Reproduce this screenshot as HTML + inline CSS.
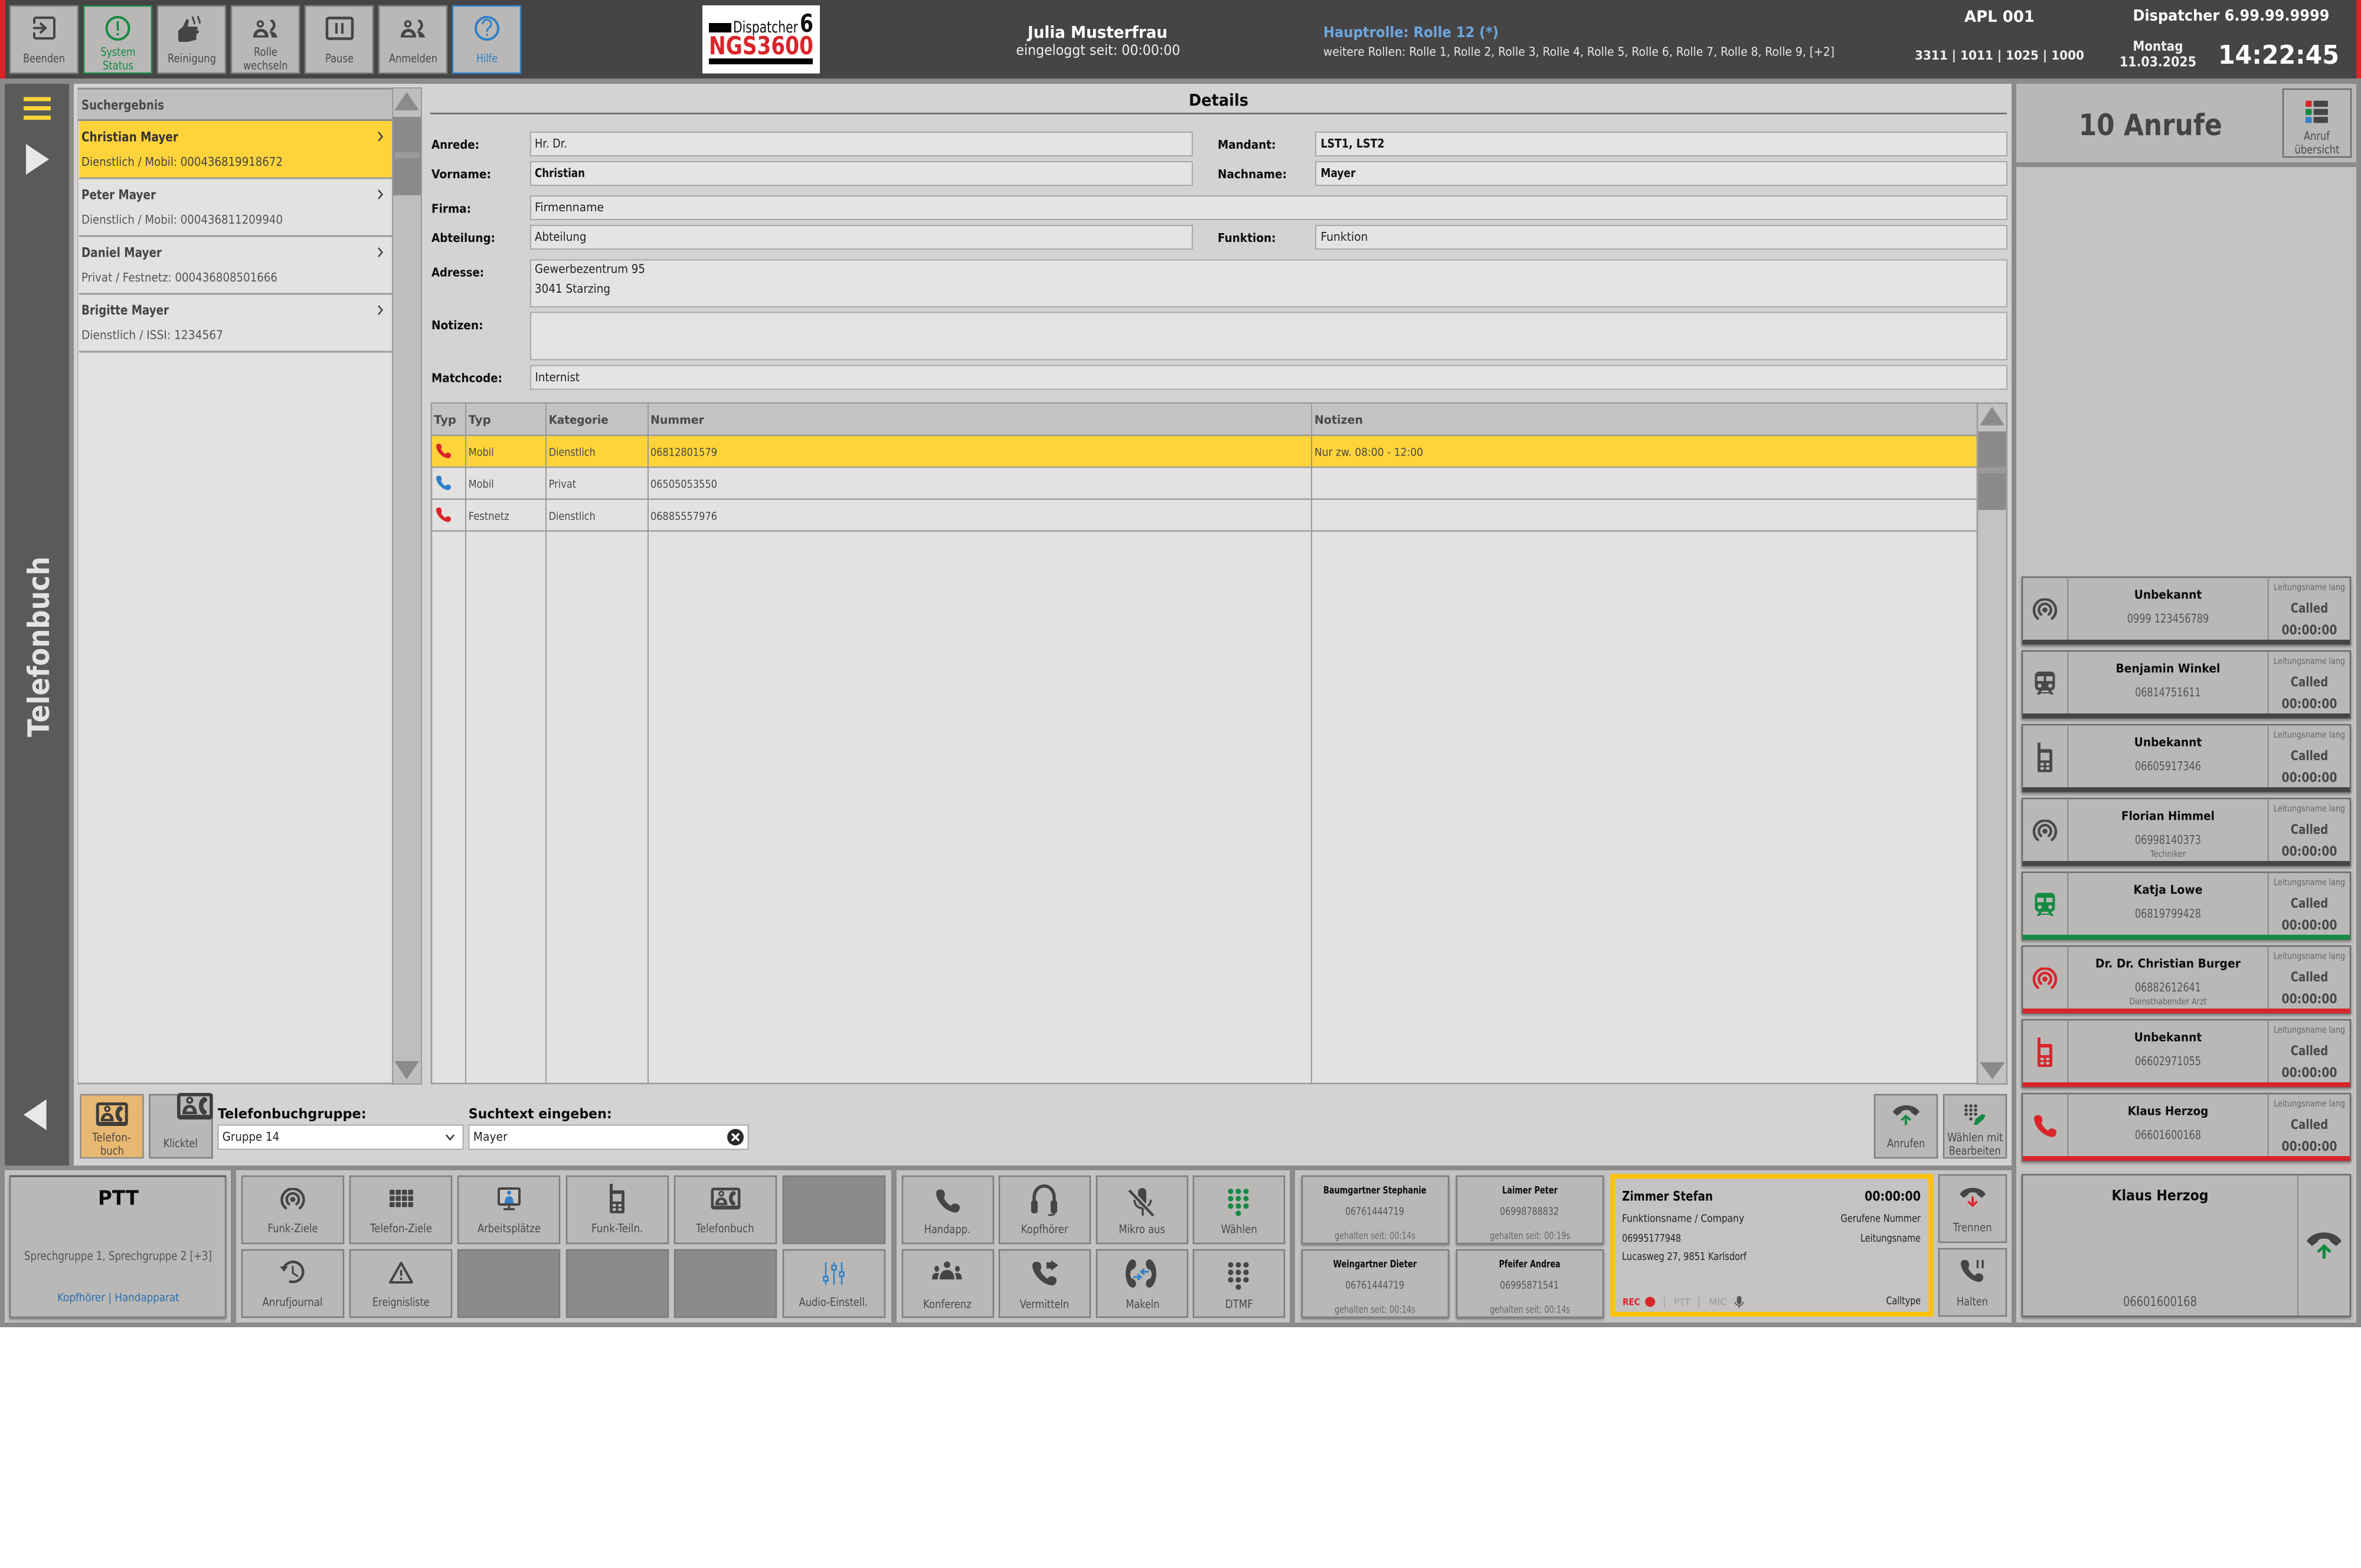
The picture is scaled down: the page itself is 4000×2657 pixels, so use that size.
<!DOCTYPE html>
<html lang="de"><head><meta charset="utf-8"><title>Dispatcher NGS3600 – Telefonbuch</title>
<style>
html,body{margin:0;padding:0;background:#fff}
svg{display:block}
text{font-family:"DejaVu Sans","Liberation Sans",sans-serif;fill:#4a4948}
.b{font-weight:700}
.w{fill:#fff}
.k{fill:#0c0c0c}
.btn{fill:#b9b8b6;stroke:#7e7d7b;stroke-width:2.5}
.emp{fill:#8c8b89;stroke:#7b7a78;stroke-width:2.5}
.fld{fill:#e5e4e2;stroke:#a8a8ab;stroke-width:2}
.sh{filter:drop-shadow(0 3px 2px rgba(0,0,0,.35))}
.card{fill:#b9b8b6;stroke:#6b6a68;stroke-width:2.5}
.sep{stroke:#8a8987;stroke-width:2}
.s18{font-size:19.5px}.s20{font-size:20.8px}.s21{font-size:22px}
</style></head>
<body>
<svg xmlns="http://www.w3.org/2000/svg" width="4000" height="2657" viewBox="0 0 4000 2657">
<defs>
<symbol id="radio" viewBox="0 0 44 40"><circle cx="22" cy="20" r="4.5" stroke="none"/><path d="M15.3 28A10.5 10.5 0 1 1 28.7 28M9.8 35A19 19 0 1 1 34.2 35" fill="none" stroke-width="4.5" stroke-linecap="round"/></symbol>
<symbol id="train" viewBox="0 0 34 39"><path fill-rule="evenodd" d="M7 0H27A7 7 0 0 1 34 7V25A7 7 0 0 1 27 32H7A7 7 0 0 1 0 25V7A7 7 0 0 1 7 0ZM4 8V16H15V8ZM19 8V16H30V8ZM4.6 24a3.4 3.4 0 1 0 6.8 0a3.4 3.4 0 1 0-6.8 0ZM22.6 24a3.4 3.4 0 1 0 6.8 0a3.4 3.4 0 1 0-6.8 0Z"/><path d="M7 32h5l-2 3h14l-2-3h5l5 7h-5l-2-2H10l-2 2H3z"/></symbol>
<symbol id="mobile" viewBox="0 0 25 50"><path fill-rule="evenodd" d="M0 1.5A1.5 1.5 0 0 1 3 0H5V11H22A3 3 0 0 1 25 14V47A3 3 0 0 1 22 50H3A3 3 0 0 1 0 47ZM5 17V30H20V17ZM4.500 36.500a3.300 2.500 0 1 0 6.600 0a3.300 2.500 0 1 0-6.600 0ZM13.900 36.500a3.300 2.500 0 1 0 6.600 0a3.300 2.500 0 1 0-6.600 0ZM4.500 43.500a3.300 2.500 0 1 0 6.600 0a3.300 2.500 0 1 0-6.600 0ZM13.900 43.500a3.300 2.500 0 1 0 6.600 0a3.300 2.500 0 1 0-6.600 0Z"/></symbol>
<symbol id="phone" viewBox="0 0 40 40"><path d="M7 0C2 0 0 3 0 7C1 21 16 37 31 39C36 40 40 36 40 31C40 26 36 24 32 24C29 24 27 25 25 28C19 24 15 19 13 14C15 12 15 10 14.500 6.500C14 2 11 0 7 0Z"/></symbol>
<symbol id="persph" viewBox="0 0 42 30"><circle cx="12" cy="7" r="4.500" fill="none" stroke-width="3.500"/><path d="M0 30C0 20 6 15.500 13 15.500C20 15.500 26 20 26 30ZM6 26.500H20C19 22.500 16.500 20.500 13 20.500C9.500 20.500 7 22.500 6 26.500Z" fill-rule="evenodd" stroke="none"/><path d="M31 1C37 6 37 13 31 17" fill="none" stroke-width="4.500" stroke-linecap="round"/><path d="M29 19C35 20 40 24 41 30H31C31 25 30 22 27 21Z" stroke="none"/></symbol>
<symbol id="book" viewBox="0 0 54 40"><path fill-rule="evenodd" d="M5 0H49A5 5 0 0 1 54 5V35A5 5 0 0 1 49 40H5A5 5 0 0 1 0 35V5A5 5 0 0 1 5 0ZM5 5V33H49V5Z" stroke="none"/><circle cx="19" cy="11" r="3.800" fill="none" stroke-width="3.200"/><path d="M8 32C8 22 13 18 19 18C25 18 30 22 30 32ZM14 28H24C23.500 24.500 22 22.500 19 22.500C16 22.500 14.500 24.500 14 28Z" fill-rule="evenodd" stroke="none"/><path d="M41 6C45 7 47 11 44 13C41 15 40 16 39.500 19C39.500 22 40.500 24 43 26C46 28 45 32 41 33C35 31 33 25 33 19.500C33 14 35 8 41 6Z" stroke="none"/></symbol>
<symbol id="hang" viewBox="0 0 60 24"><path d="M0 15C5 5 18 0 30 0C42 0 55 5 60 15L51 23.500L41 16C40 12 36 10.500 30 10.500C24 10.500 20 12 19 16L9 23.500Z"/></symbol>
<symbol id="up" viewBox="0 0 24 24"><path d="M12 0L24 11.500L20.500 14.500L14.500 9V24H9.500V9L3.500 14.500L0 11.500Z"/></symbol>
</defs>

<!-- base -->
<rect x="0" y="0" width="4000" height="2249" fill="#8c8b89"/>
<rect x="0" y="0" width="4000" height="133" fill="#464445"/>
<rect x="0" y="0" width="9" height="133" fill="#d9252a"/>
<rect x="3992" y="0" width="8" height="133" fill="#d9252a"/>

<!-- top buttons -->
<rect class="btn" x="17" y="10" width="115" height="114"/>
<rect class="btn" x="142" y="10" width="115" height="114" style="stroke:#148a42"/>
<rect class="btn" x="267" y="10" width="115" height="114"/>
<rect class="btn" x="392" y="10" width="115" height="114"/>
<rect class="btn" x="517" y="10" width="115" height="114"/>
<rect class="btn" x="642" y="10" width="115" height="114"/>
<rect class="btn" x="767" y="10" width="115" height="114" style="stroke:#2f80c8"/>
<path d="M58 40V33A3 3 0 0 1 61 30H89A3 3 0 0 1 92 33V62A3 3 0 0 1 89 65H61A3 3 0 0 1 58 62V55M56 47.500H76M68 39L77 47.500L68 56" fill="none" stroke="#464445" stroke-width="4"/>
<circle cx="199.500" cy="48" r="19" fill="none" stroke="#148a42" stroke-width="4"/><path d="M199.500 36V52M199.500 56V60" stroke="#148a42" stroke-width="3.500"/>
<path d="M310 45L316 32L320 34L318 45H332A3 3 0 0 1 332 51H326H334A3 3 0 0 1 334 57H326H332A3 3 0 0 1 332 62H326H330A3 3 0 0 1 330 68L318 71H306A4 4 0 0 1 302 67V52Z" fill="#464445"/>
<path d="M327 28C325 33 331 35 329 41M336 27C334 32 340 34 338 40" fill="none" stroke="#464445" stroke-width="3"/>
<use href="#persph" x="429" y="33.500" width="42" height="30" fill="#464445" stroke="#464445"/>
<rect x="554" y="30.500" width="43" height="35" rx="3" fill="none" stroke="#464445" stroke-width="4.500"/><path d="M570 39V57M580 39V57" stroke="#464445" stroke-width="4"/>
<use href="#persph" x="679" y="33.500" width="42" height="30" fill="#464445" stroke="#464445"/>
<circle cx="825" cy="48" r="19" fill="none" stroke="#2f80c8" stroke-width="4"/><path d="M818 41C818 30 833 32 832 41C832 47 825 47 825 54M825 57V61" fill="none" stroke="#2f80c8" stroke-width="3"/>
<text class="s18" x="39" y="105.700" textLength="71" lengthAdjust="spacingAndGlyphs">Beenden</text>
<text class="s18" x="170.500" y="94.700" textLength="59" lengthAdjust="spacingAndGlyphs" style="fill:#148a42">System</text>
<text class="s18" x="174" y="117.500" textLength="52" lengthAdjust="spacingAndGlyphs" style="fill:#148a42">Status</text>
<text class="s18" x="284" y="105.700" textLength="82" lengthAdjust="spacingAndGlyphs">Reinigung</text>
<text class="s18" x="430" y="94.700" textLength="40" lengthAdjust="spacingAndGlyphs">Rolle</text>
<text class="s18" x="412" y="117.500" textLength="75.500" lengthAdjust="spacingAndGlyphs">wechseln</text>
<text class="s18" x="551" y="105.700" textLength="48" lengthAdjust="spacingAndGlyphs">Pause</text>
<text class="s18" x="659" y="105.700" textLength="82" lengthAdjust="spacingAndGlyphs">Anmelden</text>
<text class="s18" x="807" y="105.700" textLength="36" lengthAdjust="spacingAndGlyphs" style="fill:#2f80c8">Hilfe</text>

<!-- logo -->
<rect x="1190" y="9" width="199" height="115.500" fill="#fff"/>
<rect x="1201" y="39" width="38" height="16" fill="#050505"/>
<text x="1242" y="55" font-size="27" textLength="110" lengthAdjust="spacingAndGlyphs" class="k">Dispatcher</text>
<text x="1355" y="54" font-size="42" textLength="23" lengthAdjust="spacingAndGlyphs" class="b k">6</text>
<text x="1201" y="92" font-size="42" textLength="177" lengthAdjust="spacingAndGlyphs" class="b" style="fill:#d9252a">NGS3600</text>
<rect x="1201" y="99" width="176" height="10" fill="#050505"/>

<!-- header text -->
<text x="1741" y="64" font-size="28" textLength="237" lengthAdjust="spacingAndGlyphs" class="b w">Julia Musterfrau</text>
<text x="1721.400" y="93" font-size="24" textLength="278" lengthAdjust="spacingAndGlyphs" style="fill:#efefef">eingeloggt seit: 00:00:00</text>
<text x="2242" y="63" font-size="25" textLength="297" lengthAdjust="spacingAndGlyphs" class="b" style="fill:#6ea6dc">Hauptrolle: Rolle 12 (*)</text>
<text x="2242" y="94.700" font-size="20.500" textLength="866" lengthAdjust="spacingAndGlyphs" style="fill:#e8e8e8">weitere Rollen: Rolle 1, Rolle 2, Rolle 3, Rolle 4, Rolle 5, Rolle 6, Rolle 7, Rolle 8, Rolle 9, [+2]</text>
<text x="3328" y="37" font-size="27" textLength="119" lengthAdjust="spacingAndGlyphs" class="b w">APL 001</text>
<text x="3613.500" y="35" font-size="26" textLength="333" lengthAdjust="spacingAndGlyphs" class="b w">Dispatcher 6.99.99.9999</text>
<text x="3244" y="101" font-size="21" textLength="287" lengthAdjust="spacingAndGlyphs" class="b" style="fill:#efefef">3311 | 1011 | 1025 | 1000</text>
<text x="3613.500" y="86" font-size="23" textLength="85" lengthAdjust="spacingAndGlyphs" class="b" style="fill:#efefef">Montag</text>
<text x="3591" y="112.600" font-size="23" textLength="130" lengthAdjust="spacingAndGlyphs" class="b" style="fill:#efefef">11.03.2025</text>
<text x="3758" y="108" font-size="44" textLength="205" lengthAdjust="spacingAndGlyphs" class="b w">14:22:45</text>

<!-- sidebar -->
<rect x="8" y="142" width="109" height="1833" fill="#5b5a5a"/>
<rect x="40" y="164.500" width="46" height="7" fill="#ffd43b"/><rect x="40" y="180" width="46" height="7" fill="#ffd43b"/><rect x="40" y="196" width="46" height="7" fill="#ffd43b"/>
<path d="M44 244L83 270L44 296Z" fill="#e8e8e6"/>
<text transform="translate(83 1249) rotate(-90)" font-size="50" textLength="306" lengthAdjust="spacingAndGlyphs" class="b" style="fill:#e4e3e1">Telefonbuch</text>
<path d="M78.600 1863V1915L40 1889Z" fill="#e8e8e6"/>

<!-- main panel -->
<rect x="125" y="142" width="3283" height="1833" fill="#d4d3d1"/>

<!-- result list -->
<rect x="132" y="149" width="533" height="1688" fill="#e3e2e0" stroke="#a09f9d" stroke-width="1"/>
<rect x="132" y="149" width="533" height="55" fill="#bfbebc"/>
<rect x="132" y="149" width="533" height="2.500" fill="#8c8b89"/><rect x="132" y="202" width="533" height="3" fill="#8c8b89"/>
<rect x="134" y="205" width="531" height="96" fill="#ffd43b"/>
<rect x="134" y="300.500" width="531" height="3" fill="#9d9c9a"/><rect x="134" y="398.500" width="531" height="3" fill="#9d9c9a"/><rect x="134" y="496.500" width="531" height="3" fill="#9d9c9a"/><rect x="134" y="594.500" width="531" height="3" fill="#9d9c9a"/>
<rect x="132" y="1834.500" width="533" height="3" fill="#a09f9d"/>
<text class="s21 b" x="138" y="185.700" textLength="140" lengthAdjust="spacingAndGlyphs">Suchergebnis</text>
<text class="s21 b" x="138" y="239.600" textLength="164" lengthAdjust="spacingAndGlyphs" style="fill:#333">Christian Mayer</text>
<text class="s20" x="138" y="281" textLength="341" lengthAdjust="spacingAndGlyphs" style="fill:#444">Dienstlich / Mobil: 000436819918672</text>
<text class="s21 b" x="138" y="337.500" textLength="126" lengthAdjust="spacingAndGlyphs" style="fill:#444">Peter Mayer</text>
<text class="s20" x="138" y="379" textLength="341" lengthAdjust="spacingAndGlyphs" style="fill:#555">Dienstlich / Mobil: 000436811209940</text>
<text class="s21 b" x="138" y="435.500" textLength="136" lengthAdjust="spacingAndGlyphs" style="fill:#444">Daniel Mayer</text>
<text class="s20" x="138" y="477" textLength="332" lengthAdjust="spacingAndGlyphs" style="fill:#555">Privat / Festnetz: 000436808501666</text>
<text class="s21 b" x="138" y="533" textLength="148" lengthAdjust="spacingAndGlyphs" style="fill:#444">Brigitte Mayer</text>
<text class="s20" x="138" y="574.700" textLength="240" lengthAdjust="spacingAndGlyphs" style="fill:#555">Dienstlich / ISSI: 1234567</text>
<path d="M641 224L647.500 231.500L641 239M641 322L647.500 329.500L641 337M641 420L647.500 427.500L641 435M641 518L647.500 525.500L641 533" fill="none" stroke="#444" stroke-width="2.500"/>
<!-- list scrollbar -->
<rect x="665" y="149" width="49" height="1688" fill="#bfbebc" stroke="#9a9a9e" stroke-width="2"/>
<path d="M689 156L710 187H668Z" fill="#8c8b89"/>
<rect x="666" y="198" width="47" height="133" fill="#8c8b89"/>
<rect x="668" y="258" width="42" height="10" fill="#9b9a98"/>
<path d="M668 1798H710L689 1829Z" fill="#8c8b89"/>

<!-- details -->
<text x="2014" y="178.800" font-size="28" textLength="101" lengthAdjust="spacingAndGlyphs" class="b k">Details</text>
<rect x="729" y="191" width="2671" height="2.500" fill="#666"/>
<rect class="fld" x="899" y="224" width="1121" height="40"/><rect class="fld" x="2229" y="224" width="1171" height="40"/>
<rect class="fld" x="899" y="274" width="1121" height="40"/><rect class="fld" x="2229" y="274" width="1171" height="40"/>
<rect class="fld" x="899" y="332" width="2501" height="40"/>
<rect class="fld" x="899" y="382" width="1121" height="40"/><rect class="fld" x="2229" y="382" width="1171" height="40"/>
<rect class="fld" x="899" y="440.500" width="2501" height="79.500"/>
<rect class="fld" x="899" y="529.500" width="2501" height="80"/>
<rect class="fld" x="899" y="619.500" width="2501" height="40"/>
<text class="s20 b k" x="731" y="252" textLength="81" lengthAdjust="spacingAndGlyphs">Anrede:</text>
<text class="s20 b k" x="731" y="302" textLength="101" lengthAdjust="spacingAndGlyphs">Vorname:</text>
<text class="s20 b k" x="731" y="360.400" textLength="67" lengthAdjust="spacingAndGlyphs">Firma:</text>
<text class="s20 b k" x="731" y="410" textLength="108" lengthAdjust="spacingAndGlyphs">Abteilung:</text>
<text class="s20 b k" x="731" y="468.600" textLength="89" lengthAdjust="spacingAndGlyphs">Adresse:</text>
<text class="s20 b k" x="731" y="558" textLength="87.500" lengthAdjust="spacingAndGlyphs">Notizen:</text>
<text class="s20 b k" x="731" y="647.500" textLength="120" lengthAdjust="spacingAndGlyphs">Matchcode:</text>
<text class="s20 b k" x="2063" y="252" textLength="98.500" lengthAdjust="spacingAndGlyphs">Mandant:</text>
<text class="s20 b k" x="2063" y="302" textLength="117" lengthAdjust="spacingAndGlyphs">Nachname:</text>
<text class="s20 b k" x="2063" y="410" textLength="98.500" lengthAdjust="spacingAndGlyphs">Funktion:</text>
<text class="s20" x="906" y="249.800" textLength="55" lengthAdjust="spacingAndGlyphs" style="fill:#222">Hr. Dr.</text>
<text class="s20 b" x="906" y="300" textLength="85" lengthAdjust="spacingAndGlyphs" style="fill:#111">Christian</text>
<text class="s20" x="906" y="358" textLength="117" lengthAdjust="spacingAndGlyphs" style="fill:#222">Firmenname</text>
<text class="s20" x="906" y="408" textLength="87.500" lengthAdjust="spacingAndGlyphs" style="fill:#222">Abteilung</text>
<text class="s20" x="906" y="462.500" textLength="187" lengthAdjust="spacingAndGlyphs" style="fill:#222">Gewerbezentrum 95</text>
<text class="s20" x="906" y="496" textLength="128" lengthAdjust="spacingAndGlyphs" style="fill:#222">3041 Starzing</text>
<text class="s20" x="906.500" y="646" textLength="75.500" lengthAdjust="spacingAndGlyphs" style="fill:#222">Internist</text>
<text class="s20 b" x="2237.500" y="250" textLength="108" lengthAdjust="spacingAndGlyphs" style="fill:#111">LST1, LST2</text>
<text class="s20 b" x="2237.500" y="300" textLength="59" lengthAdjust="spacingAndGlyphs" style="fill:#111">Mayer</text>
<text class="s20" x="2237.500" y="408" textLength="80" lengthAdjust="spacingAndGlyphs" style="fill:#222">Funktion</text>

<!-- table -->
<rect x="731" y="683" width="2619" height="1153" fill="#e3e2e0" stroke="#9a9997" stroke-width="2.500"/>
<rect x="732" y="684" width="2618" height="53" fill="#c4c3c1"/>
<rect x="732" y="739" width="2618" height="52" fill="#ffd43b"/>
<rect x="732" y="736.500" width="2618" height="2.500" fill="#9a9997"/><rect x="732" y="790.500" width="2618" height="2.500" fill="#a09f9d"/><rect x="732" y="844.500" width="2618" height="2.500" fill="#a09f9d"/><rect x="732" y="898.500" width="2618" height="2.500" fill="#a09f9d"/>
<path d="M789 683V1836M925 683V1836M1098 683V1836M2222 683V1836" stroke="#9a9997" stroke-width="2"/>
<text class="s18 b" x="735" y="718" textLength="38" lengthAdjust="spacingAndGlyphs">Typ</text>
<text class="s18 b" x="793.700" y="718" textLength="38" lengthAdjust="spacingAndGlyphs">Typ</text>
<text class="s18 b" x="929.700" y="718" textLength="101" lengthAdjust="spacingAndGlyphs">Kategorie</text>
<text class="s18 b" x="1102" y="718" textLength="91" lengthAdjust="spacingAndGlyphs">Nummer</text>
<text class="s18 b" x="2227" y="718" textLength="82" lengthAdjust="spacingAndGlyphs">Notizen</text>
<use href="#phone" x="739" y="752" width="25" height="25" fill="#d9252a"/>
<use href="#phone" x="739" y="806" width="25" height="25" fill="#2f80c8"/>
<use href="#phone" x="739" y="860" width="25" height="25" fill="#d9252a"/>
<text x="793.700" y="772.700" font-size="19" textLength="43" lengthAdjust="spacingAndGlyphs">Mobil</text>
<text x="929.700" y="772.700" font-size="19" textLength="79" lengthAdjust="spacingAndGlyphs">Dienstlich</text>
<text x="1102" y="772.700" font-size="19" textLength="113" lengthAdjust="spacingAndGlyphs">06812801579</text>
<text x="2227" y="772.700" font-size="19" textLength="184" lengthAdjust="spacingAndGlyphs">Nur zw. 08:00 - 12:00</text>
<text x="793.700" y="826.700" font-size="19" textLength="43" lengthAdjust="spacingAndGlyphs">Mobil</text>
<text x="929.700" y="826.700" font-size="19" textLength="46.400" lengthAdjust="spacingAndGlyphs">Privat</text>
<text x="1102" y="826.700" font-size="19" textLength="113" lengthAdjust="spacingAndGlyphs">06505053550</text>
<text x="793.700" y="881" font-size="19" textLength="69" lengthAdjust="spacingAndGlyphs">Festnetz</text>
<text x="929.700" y="881" font-size="19" textLength="79" lengthAdjust="spacingAndGlyphs">Dienstlich</text>
<text x="1102" y="881" font-size="19" textLength="113" lengthAdjust="spacingAndGlyphs">06885557976</text>
<!-- table scrollbar -->
<rect x="3350" y="683" width="50" height="1154" fill="#c4c3c1" stroke="#9a9a9e" stroke-width="2.500"/>
<path d="M3375 689L3396 720.700H3354Z" fill="#8c8b89"/>
<rect x="3351.500" y="731" width="47" height="133" fill="#8c8b89"/>
<rect x="3352" y="791.700" width="46" height="10.300" fill="#9b9a98"/>
<path d="M3354 1800H3397L3375.500 1829Z" fill="#8c8b89"/>

<!-- bottom of main -->
<rect x="136.500" y="1855" width="106" height="107" fill="#e8b872" stroke="#8c8b89" stroke-width="2.500"/>
<rect class="btn" x="253.500" y="1855" width="106" height="107"/>
<use href="#book" x="162.500" y="1868" width="54.500" height="40" fill="#3f3e3d" stroke="#3f3e3d"/>
<use href="#book" x="300" y="1851" width="60.700" height="47" fill="#3f3e3d" stroke="#3f3e3d"/>
<text class="s18" x="156" y="1934" textLength="66" lengthAdjust="spacingAndGlyphs">Telefon-</text>
<text class="s18" x="170" y="1956.700" textLength="40" lengthAdjust="spacingAndGlyphs">buch</text>
<text class="s18" x="276.800" y="1944" textLength="58" lengthAdjust="spacingAndGlyphs">Klicktel</text>
<text x="368.700" y="1895" font-size="23" textLength="252" lengthAdjust="spacingAndGlyphs" class="b k">Telefonbuchgruppe:</text>
<text x="793.700" y="1895" font-size="23" textLength="243" lengthAdjust="spacingAndGlyphs" class="b k">Suchtext eingeben:</text>
<rect x="369.500" y="1906.500" width="415" height="41" fill="#fff" stroke="#a8a8ab" stroke-width="2"/>
<rect x="794.500" y="1906.500" width="473" height="41" fill="#fff" stroke="#a8a8ab" stroke-width="2"/>
<text class="s20" x="376.800" y="1933" textLength="96.400" lengthAdjust="spacingAndGlyphs" style="fill:#222">Gruppe 14</text>
<text class="s20" x="801.800" y="1933" textLength="58" lengthAdjust="spacingAndGlyphs" style="fill:#222">Mayer</text>
<path d="M756 1923L762.500 1931L769 1923" fill="none" stroke="#333" stroke-width="2.500"/>
<circle cx="1246" cy="1927" r="14" fill="#2b2b2b"/><path d="M1240 1921L1252 1933M1252 1921L1240 1933" stroke="#fff" stroke-width="3.500"/>
<rect class="btn" x="3176" y="1855" width="106" height="107"/>
<use href="#hang" x="3207" y="1873" width="45" height="18" fill="#464445"/>
<use href="#up" x="3220" y="1888" width="18" height="19" fill="#148a42"/>
<text class="s18" x="3197" y="1944" textLength="64.500" lengthAdjust="spacingAndGlyphs">Anrufen</text>
<rect class="btn" x="3293" y="1855" width="106" height="107"/>
<g fill="#464445"><circle cx="3331" cy="1874" r="2.800"/><circle cx="3339" cy="1874" r="2.800"/><circle cx="3347" cy="1874" r="2.800"/><circle cx="3331" cy="1881" r="2.800"/><circle cx="3339" cy="1881" r="2.800"/><circle cx="3347" cy="1881" r="2.800"/><circle cx="3331" cy="1888" r="2.800"/><circle cx="3339" cy="1888" r="2.800"/><circle cx="3347" cy="1888" r="2.800"/><circle cx="3339" cy="1896" r="2.800"/></g>
<path d="M3344 1906L3347 1896L3358 1888L3364 1889L3361 1896L3350 1906Z" fill="#148a42"/>
<text class="s18" x="3299" y="1934" textLength="94.400" lengthAdjust="spacingAndGlyphs">Wählen mit</text>
<text class="s18" x="3301.700" y="1956.700" textLength="88" lengthAdjust="spacingAndGlyphs">Bearbeiten</text>

<!-- bottom panels -->
<rect x="8" y="1983" width="383" height="258" fill="#c4c3c1"/>
<rect x="400" y="1983" width="1110" height="258" fill="#c4c3c1"/>
<rect x="1519" y="1983" width="666" height="258" fill="#c4c3c1"/>
<rect x="2194" y="1983" width="1214" height="258" fill="#c4c3c1"/>

<rect class="btn sh" x="17" y="1993" width="365" height="239" style="stroke:#7e7d7b"/>
<rect x="16" y="1991.500" width="367" height="3" fill="#5b5a5a"/>
<text x="166" y="2041.700" font-size="34" textLength="69" lengthAdjust="spacingAndGlyphs" class="b k">PTT</text>
<text x="41" y="2135" font-size="20" textLength="318" lengthAdjust="spacingAndGlyphs" style="fill:#555">Sprechgruppe 1, Sprechgruppe 2 [+3]</text>
<text x="97" y="2205" font-size="19" textLength="206.600" lengthAdjust="spacingAndGlyphs" style="fill:#2a6eb5">Kopfhörer | Handapparat</text>

<!-- grid 1 -->
<rect class="btn" x="410" y="1993" width="172" height="114"/><rect class="btn" x="593" y="1993" width="172" height="114"/><rect class="btn" x="776" y="1993" width="172" height="114"/><rect class="btn" x="960" y="1993" width="172" height="114"/><rect class="btn" x="1143" y="1993" width="172" height="114"/><rect class="emp" x="1327" y="1993" width="172" height="114"/>
<rect class="btn" x="410" y="2118" width="172" height="114"/><rect class="btn" x="593" y="2118" width="172" height="114"/><rect class="emp" x="776" y="2118" width="172" height="114"/><rect class="emp" x="960" y="2118" width="172" height="114"/><rect class="emp" x="1143" y="2118" width="172" height="114"/><rect class="btn" x="1327" y="2118" width="172" height="114"/>
<use href="#radio" x="474.500" y="2013" width="43" height="39" fill="#464445" stroke="#464445"/>
<g fill="#464445"><rect x="660" y="2016" width="8.500" height="8.500" rx="1.500"/><rect x="670.500" y="2016" width="8.500" height="8.500" rx="1.500"/><rect x="681" y="2016" width="8.500" height="8.500" rx="1.500"/><rect x="691.500" y="2016" width="8.500" height="8.500" rx="1.500"/><rect x="660" y="2026.500" width="8.500" height="8.500" rx="1.500"/><rect x="670.500" y="2026.500" width="8.500" height="8.500" rx="1.500"/><rect x="681" y="2026.500" width="8.500" height="8.500" rx="1.500"/><rect x="691.500" y="2026.500" width="8.500" height="8.500" rx="1.500"/><rect x="660" y="2037" width="8.500" height="8.500" rx="1.500"/><rect x="670.500" y="2037" width="8.500" height="8.500" rx="1.500"/><rect x="681" y="2037" width="8.500" height="8.500" rx="1.500"/><rect x="691.500" y="2037" width="8.500" height="8.500" rx="1.500"/></g>
<rect x="845" y="2014" width="35" height="27" rx="2" fill="#c9c8c6" stroke="#464445" stroke-width="4"/><circle cx="862.500" cy="2021" r="3.500" fill="#2f80c8"/><path d="M855 2039C855 2030 858 2027 862.500 2027C867 2027 870 2030 870 2039Z" fill="#2f80c8"/><path d="M862.500 2043V2048M853 2049H872" stroke="#464445" stroke-width="3.500"/>
<use href="#mobile" x="1033" y="2006" width="25" height="50" fill="#464445"/>
<use href="#book" x="1204.500" y="2012" width="50" height="38" fill="#464445" stroke="#464445"/>
<path d="M481 2148A17 17 0 1 1 490 2171" fill="none" stroke="#464445" stroke-width="4.500"/><path d="M474 2146H488L481 2155Z" fill="#464445"/><path d="M496 2145V2157L505 2163" fill="none" stroke="#464445" stroke-width="3"/>
<path d="M679.500 2140L698 2173H661Z" fill="none" stroke="#464445" stroke-width="4" stroke-linejoin="round"/><path d="M679.500 2152V2162M679.500 2165V2169" stroke="#464445" stroke-width="3.500"/>
<path d="M1399 2139V2177M1413 2139V2177M1426 2139V2177" stroke="#2f80c8" stroke-width="2.500"/><path d="M1395.500 2163.500h7v7h-7zM1409.500 2144.500h7v7h-7zM1422.500 2155.500h7v7h-7z" fill="#b9b8b6" stroke="#2f80c8" stroke-width="2.500"/>
<text class="s18" x="453.600" y="2088" textLength="85" lengthAdjust="spacingAndGlyphs">Funk-Ziele</text>
<text class="s18" x="627" y="2088" textLength="105" lengthAdjust="spacingAndGlyphs">Telefon-Ziele</text>
<text class="s18" x="809" y="2088" textLength="107" lengthAdjust="spacingAndGlyphs">Arbeitsplätze</text>
<text class="s18" x="1002" y="2088" textLength="87.500" lengthAdjust="spacingAndGlyphs">Funk-Teiln.</text>
<text class="s18" x="1178.600" y="2088" textLength="99" lengthAdjust="spacingAndGlyphs">Telefonbuch</text>
<text class="s18" x="444.600" y="2213" textLength="102" lengthAdjust="spacingAndGlyphs">Anrufjournal</text>
<text class="s18" x="631" y="2213" textLength="96.500" lengthAdjust="spacingAndGlyphs">Ereignisliste</text>
<text class="s18" x="1353.600" y="2213" textLength="116.500" lengthAdjust="spacingAndGlyphs">Audio-Einstell.</text>

<!-- grid 2 -->
<rect class="btn" x="1529" y="1993" width="154" height="114"/><rect class="btn" x="1693" y="1993" width="154" height="114"/><rect class="btn" x="1858" y="1993" width="154" height="114"/><rect class="btn" x="2022" y="1993" width="154" height="114"/>
<rect class="btn" x="1529" y="2118" width="154" height="114"/><rect class="btn" x="1693" y="2118" width="154" height="114"/><rect class="btn" x="1858" y="2118" width="154" height="114"/><rect class="btn" x="2022" y="2118" width="154" height="114"/>
<use href="#phone" x="1586" y="2015" width="40" height="41" fill="#464445"/>
<path d="M1752 2040V2030C1752 2003 1786 2003 1786 2030V2040" fill="none" stroke="#464445" stroke-width="5.500"/><rect x="1747" y="2034" width="11" height="22" rx="4" fill="#464445"/><rect x="1780" y="2034" width="11" height="22" rx="4" fill="#464445"/><path d="M1787 2055C1786 2059 1782 2059 1776 2059" fill="none" stroke="#464445" stroke-width="3"/>
<rect x="1928" y="2013" width="14" height="30" rx="7" fill="#464445"/><path d="M1922 2033C1922 2052 1948 2052 1950 2033M1936 2047V2060" fill="none" stroke="#464445" stroke-width="3.500"/><path d="M1915 2017L1954 2060" stroke="#b9b8b6" stroke-width="8"/><path d="M1913 2017L1954 2060" stroke="#464445" stroke-width="4.500"/>
<g fill="#148a42"><circle cx="2085" cy="2018.700" r="4.600"/><circle cx="2098" cy="2018.700" r="4.600"/><circle cx="2111" cy="2018.700" r="4.600"/><circle cx="2085" cy="2031" r="4.600"/><circle cx="2098" cy="2031" r="4.600"/><circle cx="2111" cy="2031" r="4.600"/><circle cx="2085" cy="2043.700" r="4.600"/><circle cx="2098" cy="2043.700" r="4.600"/><circle cx="2111" cy="2043.700" r="4.600"/><circle cx="2098" cy="2056" r="4.600"/></g>
<g fill="#464445"><circle cx="1604.500" cy="2143" r="5.500"/><ellipse cx="1587" cy="2150" rx="4" ry="5"/><ellipse cx="1622" cy="2150" rx="4" ry="5"/><path d="M1592 2168C1592 2157 1597 2152 1604.500 2152C1612 2152 1617 2157 1617 2168Z"/><path d="M1579 2168C1579 2160 1582 2157 1587 2157C1590 2157 1591 2158 1591 2159C1589 2162 1589 2165 1589 2168Z"/><path d="M1629.500 2168C1629.500 2160 1627 2157 1622 2157C1619 2157 1618 2158 1618 2159C1620 2162 1620 2165 1620 2168Z"/></g>
<use href="#phone" x="1749" y="2138" width="41" height="41" fill="#464445"/>
<path d="M1773 2139H1781V2135.500L1793 2144L1781 2153V2149.500H1773Z" fill="#464445"/>
<path d="M1918 2134C1924 2134 1926 2140 1924 2146C1922 2151 1919 2151 1917 2152C1914 2156 1914 2162 1917 2166C1919 2167 1923 2168 1924 2172C1926 2178 1923 2182 1918 2182C1911 2180 1907 2168 1907 2158C1907 2148 1911 2136 1918 2134Z" fill="#464445"/>
<path d="M1948 2134C1942 2134 1940 2140 1942 2146C1944 2151 1947 2151 1949 2152C1952 2156 1952 2162 1949 2166C1947 2167 1943 2168 1942 2172C1940 2178 1943 2182 1948 2182C1955 2180 1959 2168 1959 2158C1959 2148 1955 2136 1948 2134Z" fill="#464445"/>
<path d="M1947 2155H1934M1939 2150L1933 2155L1939 2160M1920 2164H1932M1927 2159L1933 2164L1927 2169" fill="none" stroke="#2f80c8" stroke-width="3"/>
<g fill="#464445"><circle cx="2085" cy="2143.300" r="4.600"/><circle cx="2098" cy="2143.300" r="4.600"/><circle cx="2111" cy="2143.300" r="4.600"/><circle cx="2085" cy="2156" r="4.600"/><circle cx="2098" cy="2156" r="4.600"/><circle cx="2111" cy="2156" r="4.600"/><circle cx="2085" cy="2168.700" r="4.600"/><circle cx="2098" cy="2168.700" r="4.600"/><circle cx="2111" cy="2168.700" r="4.600"/><circle cx="2098" cy="2181" r="4.600"/></g>
<text class="s18" x="1565.600" y="2089.300" textLength="78.600" lengthAdjust="spacingAndGlyphs">Handapp.</text>
<text class="s18" x="1729.800" y="2089.300" textLength="80" lengthAdjust="spacingAndGlyphs">Kopfhörer</text>
<text class="s18" x="1895.400" y="2089.300" textLength="78.600" lengthAdjust="spacingAndGlyphs">Mikro aus</text>
<text class="s18" x="2068.800" y="2089.300" textLength="61" lengthAdjust="spacingAndGlyphs">Wählen</text>
<text class="s18" x="1564" y="2216.700" textLength="82" lengthAdjust="spacingAndGlyphs">Konferenz</text>
<text class="s18" x="1727.700" y="2216.700" textLength="83.500" lengthAdjust="spacingAndGlyphs">Vermitteln</text>
<text class="s18" x="1907.400" y="2216.700" textLength="57" lengthAdjust="spacingAndGlyphs">Makeln</text>
<text class="s18" x="2075.800" y="2216.700" textLength="47" lengthAdjust="spacingAndGlyphs">DTMF</text>

<!-- held calls -->
<rect class="btn sh" x="2206" y="1993" width="248" height="114"/><rect class="btn sh" x="2468" y="1993" width="248" height="114"/>
<rect class="btn sh" x="2206" y="2118" width="248" height="114"/><rect class="btn sh" x="2468" y="2118" width="248" height="114"/>
<text x="2242" y="2022.300" font-size="16.500" textLength="174.500" lengthAdjust="spacingAndGlyphs" class="b k">Baumgartner Stephanie</text>
<text x="2279" y="2058.300" font-size="18" textLength="100" lengthAdjust="spacingAndGlyphs" style="fill:#555">06761444719</text>
<text x="2261" y="2099.300" font-size="16.500" textLength="137" lengthAdjust="spacingAndGlyphs" style="fill:#666">gehalten seit: 00:14s</text>
<text x="2545" y="2022.300" font-size="16.500" textLength="94" lengthAdjust="spacingAndGlyphs" class="b k">Laimer Peter</text>
<text x="2541" y="2058.300" font-size="18" textLength="100" lengthAdjust="spacingAndGlyphs" style="fill:#555">06998788832</text>
<text x="2524" y="2099.300" font-size="16.500" textLength="136" lengthAdjust="spacingAndGlyphs" style="fill:#666">gehalten seit: 00:19s</text>
<text x="2258.600" y="2147.300" font-size="16.500" textLength="141.600" lengthAdjust="spacingAndGlyphs" class="b k">Weingartner Dieter</text>
<text x="2279" y="2183.300" font-size="18" textLength="100" lengthAdjust="spacingAndGlyphs" style="fill:#555">06761444719</text>
<text x="2261" y="2224.300" font-size="16.500" textLength="137" lengthAdjust="spacingAndGlyphs" style="fill:#666">gehalten seit: 00:14s</text>
<text x="2539.500" y="2147.300" font-size="16.500" textLength="104" lengthAdjust="spacingAndGlyphs" class="b k">Pfeifer Andrea</text>
<text x="2541" y="2183.300" font-size="18" textLength="100" lengthAdjust="spacingAndGlyphs" style="fill:#555">06995871541</text>
<text x="2524" y="2224.300" font-size="16.500" textLength="136" lengthAdjust="spacingAndGlyphs" style="fill:#666">gehalten seit: 00:14s</text>

<!-- active call -->
<rect x="2732" y="1993.300" width="539" height="233.700" fill="#c4c3c1" stroke="#ffc107" stroke-width="8"/>
<text x="2748" y="2034.700" font-size="22" textLength="154" lengthAdjust="spacingAndGlyphs" class="b k">Zimmer Stefan</text>
<text x="3159" y="2034.700" font-size="22" textLength="95" lengthAdjust="spacingAndGlyphs" class="b k">00:00:00</text>
<text x="2748" y="2070.700" font-size="18" textLength="207" lengthAdjust="spacingAndGlyphs" style="fill:#222">Funktionsname  /  Company</text>
<text x="3118.500" y="2070.700" font-size="18" textLength="135.500" lengthAdjust="spacingAndGlyphs" style="fill:#222">Gerufene Nummer</text>
<text x="2748" y="2104" font-size="18" textLength="100" lengthAdjust="spacingAndGlyphs" style="fill:#222">06995177948</text>
<text x="3152" y="2104" font-size="18" textLength="102" lengthAdjust="spacingAndGlyphs" style="fill:#222">Leitungsname</text>
<text x="2748" y="2135" font-size="18" textLength="211" lengthAdjust="spacingAndGlyphs" style="fill:#222">Lucasweg 27, 9851 Karlsdorf</text>
<text x="2749" y="2211.700" font-size="16" textLength="29.600" lengthAdjust="spacingAndGlyphs" class="b" style="fill:#d9252a">REC</text>
<circle cx="2795.600" cy="2206" r="8.500" fill="#d9252a"/>
<path d="M2819.700 2197.700V2216.700M2878 2197.700V2216.700" stroke="#a0a09e" stroke-width="1.500"/>
<text x="2836" y="2211.700" font-size="16" textLength="28" lengthAdjust="spacingAndGlyphs" style="fill:#999">PTT</text>
<text x="2895" y="2211.700" font-size="16" textLength="30.500" lengthAdjust="spacingAndGlyphs" style="fill:#999">MIC</text>
<rect x="2942.500" y="2196" width="8" height="14" rx="4" fill="#5a5957"/><path d="M2939.500 2206C2939.500 2214 2953.500 2214 2953.500 2206M2946.500 2211V2216.500" fill="none" stroke="#5a5957" stroke-width="1.800"/>
<text x="3195.500" y="2210" font-size="18" textLength="58.500" lengthAdjust="spacingAndGlyphs" style="fill:#222">Calltype</text>

<rect class="btn" x="3285" y="1991" width="114" height="114"/><rect class="btn" x="3285" y="2116" width="114" height="114"/>
<use href="#hang" x="3320" y="2012.700" width="44.400" height="17.500" fill="#464445"/>
<use href="#up" x="3333" y="2027" width="18" height="19" fill="#d9252a" transform="rotate(180 3342 2036.500)"/>
<text class="s18" x="3308.700" y="2086.700" textLength="66" lengthAdjust="spacingAndGlyphs">Trennen</text>
<use href="#phone" x="3322" y="2135" width="38" height="38" fill="#464445"/>
<path d="M3350.500 2135V2149M3359 2135V2149" stroke="#464445" stroke-width="3.500"/>
<text class="s18" x="3315" y="2212" textLength="53" lengthAdjust="spacingAndGlyphs">Halten</text>

<!-- right panel -->
<rect x="3416" y="142" width="576" height="133" fill="#b9b8b6"/>
<text x="3521.700" y="229" font-size="50" textLength="243" lengthAdjust="spacingAndGlyphs" class="b" style="fill:#444">10 Anrufe</text>
<rect x="3868" y="151" width="115" height="115" fill="#b9b8b6" stroke="#6e6d6b" stroke-width="2.500"/>
<rect x="3906" y="170.600" width="10.600" height="10.400" rx="2" fill="#d9252a"/><rect x="3919.600" y="170.600" width="24.400" height="10.400" rx="2" fill="#464445"/>
<rect x="3906" y="184.500" width="10.600" height="10.400" rx="2" fill="#148a42"/><rect x="3919.600" y="184.500" width="24.400" height="10.400" rx="2" fill="#464445"/>
<rect x="3906" y="198" width="10.600" height="10.400" rx="2" fill="#2f80c8"/><rect x="3919.600" y="198" width="24.400" height="10.400" rx="2" fill="#464445"/>
<text class="s18" x="3903" y="237" textLength="44" lengthAdjust="spacingAndGlyphs">Anruf</text>
<text class="s18" x="3887.500" y="260" textLength="76" lengthAdjust="spacingAndGlyphs">übersicht</text>
<rect x="3416" y="283" width="576" height="1958" fill="#c4c3c1"/>

<!-- call cards -->
<rect class="card sh" x="3426" y="978" width="556" height="114"/><rect x="3427" y="1084" width="554" height="8" fill="#464445"/><path class="sep" d="M3503.300 978V1084M3842.800 978V1084"/>
<use href="#radio" x="3443" y="1014" width="43" height="39" fill="#4a4948" stroke="#4a4948"/>
<text x="3673" y="1014.500" font-size="20.500" text-anchor="middle" textLength="114.500" lengthAdjust="spacingAndGlyphs" class="b k">Unbekannt</text>
<text x="3673" y="1055" font-size="20.500" text-anchor="middle" textLength="138.500" lengthAdjust="spacingAndGlyphs" style="fill:#555">0999 123456789</text>
<text x="3912.500" y="1000" font-size="15.500" text-anchor="middle" textLength="121" lengthAdjust="spacingAndGlyphs" style="fill:#666">Leitungsname lang</text>
<text x="3912.500" y="1038" font-size="22" text-anchor="middle" textLength="63.500" lengthAdjust="spacingAndGlyphs" class="b">Called</text>
<text x="3912.500" y="1075" font-size="22" text-anchor="middle" textLength="94" lengthAdjust="spacingAndGlyphs" class="b">00:00:00</text>

<rect class="card sh" x="3426" y="1103" width="556" height="114"/><rect x="3427" y="1209" width="554" height="8" fill="#464445"/><path class="sep" d="M3503.300 1103V1209M3842.800 1103V1209"/>
<use href="#train" x="3447.500" y="1138" width="34" height="39" fill="#4a4948"/>
<text x="3673" y="1139.500" font-size="20.500" text-anchor="middle" textLength="177" lengthAdjust="spacingAndGlyphs" class="b k">Benjamin Winkel</text>
<text x="3673" y="1180" font-size="20.500" text-anchor="middle" textLength="111.400" lengthAdjust="spacingAndGlyphs" style="fill:#555">06814751611</text>
<text x="3912.500" y="1125" font-size="15.500" text-anchor="middle" textLength="121" lengthAdjust="spacingAndGlyphs" style="fill:#666">Leitungsname lang</text>
<text x="3912.500" y="1163" font-size="22" text-anchor="middle" textLength="63.500" lengthAdjust="spacingAndGlyphs" class="b">Called</text>
<text x="3912.500" y="1200" font-size="22" text-anchor="middle" textLength="94" lengthAdjust="spacingAndGlyphs" class="b">00:00:00</text>

<rect class="card sh" x="3426" y="1228" width="556" height="114"/><rect x="3427" y="1334" width="554" height="8" fill="#464445"/><path class="sep" d="M3503.300 1228V1334M3842.800 1228V1334"/>
<use href="#mobile" x="3452" y="1258.500" width="25" height="50" fill="#4a4948"/>
<text x="3673" y="1264.500" font-size="20.500" text-anchor="middle" textLength="114.500" lengthAdjust="spacingAndGlyphs" class="b k">Unbekannt</text>
<text x="3673" y="1305" font-size="20.500" text-anchor="middle" textLength="112" lengthAdjust="spacingAndGlyphs" style="fill:#555">06605917346</text>
<text x="3912.500" y="1250" font-size="15.500" text-anchor="middle" textLength="121" lengthAdjust="spacingAndGlyphs" style="fill:#666">Leitungsname lang</text>
<text x="3912.500" y="1288" font-size="22" text-anchor="middle" textLength="63.500" lengthAdjust="spacingAndGlyphs" class="b">Called</text>
<text x="3912.500" y="1325" font-size="22" text-anchor="middle" textLength="94" lengthAdjust="spacingAndGlyphs" class="b">00:00:00</text>

<rect class="card sh" x="3426" y="1353" width="556" height="114"/><rect x="3427" y="1459" width="554" height="8" fill="#464445"/><path class="sep" d="M3503.300 1353V1459M3842.800 1353V1459"/>
<use href="#radio" x="3443" y="1389" width="43" height="39" fill="#4a4948" stroke="#4a4948"/>
<text x="3673" y="1389.500" font-size="20.500" text-anchor="middle" textLength="158" lengthAdjust="spacingAndGlyphs" class="b k">Florian Himmel</text>
<text x="3673" y="1430" font-size="20.500" text-anchor="middle" textLength="112" lengthAdjust="spacingAndGlyphs" style="fill:#555">06998140373</text>
<text x="3673" y="1452" font-size="15" text-anchor="middle" textLength="60.400" lengthAdjust="spacingAndGlyphs" style="fill:#666">Techniker</text>
<text x="3912.500" y="1375" font-size="15.500" text-anchor="middle" textLength="121" lengthAdjust="spacingAndGlyphs" style="fill:#666">Leitungsname lang</text>
<text x="3912.500" y="1413" font-size="22" text-anchor="middle" textLength="63.500" lengthAdjust="spacingAndGlyphs" class="b">Called</text>
<text x="3912.500" y="1450" font-size="22" text-anchor="middle" textLength="94" lengthAdjust="spacingAndGlyphs" class="b">00:00:00</text>

<rect class="card sh" x="3426" y="1478" width="556" height="114"/><rect x="3427" y="1584" width="554" height="8" fill="#148a42"/><path class="sep" d="M3503.300 1478V1584M3842.800 1478V1584"/>
<use href="#train" x="3447.500" y="1513" width="34" height="39" fill="#148a42"/>
<text x="3673" y="1514.500" font-size="20.500" text-anchor="middle" textLength="117" lengthAdjust="spacingAndGlyphs" class="b k">Katja Lowe</text>
<text x="3673" y="1555" font-size="20.500" text-anchor="middle" textLength="112" lengthAdjust="spacingAndGlyphs" style="fill:#555">06819799428</text>
<text x="3912.500" y="1500" font-size="15.500" text-anchor="middle" textLength="121" lengthAdjust="spacingAndGlyphs" style="fill:#666">Leitungsname lang</text>
<text x="3912.500" y="1538" font-size="22" text-anchor="middle" textLength="63.500" lengthAdjust="spacingAndGlyphs" class="b">Called</text>
<text x="3912.500" y="1575" font-size="22" text-anchor="middle" textLength="94" lengthAdjust="spacingAndGlyphs" class="b">00:00:00</text>

<rect class="card sh" x="3426" y="1603" width="556" height="114"/><rect x="3427" y="1709" width="554" height="8" fill="#d9252a"/><path class="sep" d="M3503.300 1603V1709M3842.800 1603V1709"/>
<use href="#radio" x="3443" y="1639.500" width="43" height="39" fill="#d9252a" stroke="#d9252a"/>
<text x="3673" y="1639.500" font-size="20.500" text-anchor="middle" textLength="246" lengthAdjust="spacingAndGlyphs" class="b k">Dr. Dr. Christian Burger</text>
<text x="3673" y="1680" font-size="20.500" text-anchor="middle" textLength="112" lengthAdjust="spacingAndGlyphs" style="fill:#555">06882612641</text>
<text x="3673" y="1702" font-size="15" text-anchor="middle" textLength="131" lengthAdjust="spacingAndGlyphs" style="fill:#666">Diensthabender Arzt</text>
<text x="3912.500" y="1625" font-size="15.500" text-anchor="middle" textLength="121" lengthAdjust="spacingAndGlyphs" style="fill:#666">Leitungsname lang</text>
<text x="3912.500" y="1663" font-size="22" text-anchor="middle" textLength="63.500" lengthAdjust="spacingAndGlyphs" class="b">Called</text>
<text x="3912.500" y="1700" font-size="22" text-anchor="middle" textLength="94" lengthAdjust="spacingAndGlyphs" class="b">00:00:00</text>

<rect class="card sh" x="3426" y="1728" width="556" height="114"/><rect x="3427" y="1834" width="554" height="8" fill="#d9252a"/><path class="sep" d="M3503.300 1728V1834M3842.800 1728V1834"/>
<use href="#mobile" x="3452" y="1758" width="25" height="50" fill="#d9252a"/>
<text x="3673" y="1764.500" font-size="20.500" text-anchor="middle" textLength="114.500" lengthAdjust="spacingAndGlyphs" class="b k">Unbekannt</text>
<text x="3673" y="1805" font-size="20.500" text-anchor="middle" textLength="112" lengthAdjust="spacingAndGlyphs" style="fill:#555">06602971055</text>
<text x="3912.500" y="1750" font-size="15.500" text-anchor="middle" textLength="121" lengthAdjust="spacingAndGlyphs" style="fill:#666">Leitungsname lang</text>
<text x="3912.500" y="1788" font-size="22" text-anchor="middle" textLength="63.500" lengthAdjust="spacingAndGlyphs" class="b">Called</text>
<text x="3912.500" y="1825" font-size="22" text-anchor="middle" textLength="94" lengthAdjust="spacingAndGlyphs" class="b">00:00:00</text>

<rect class="card sh" x="3426" y="1853" width="556" height="114"/><rect x="3427" y="1959" width="554" height="8" fill="#d9252a"/><path class="sep" d="M3503.300 1853V1959M3842.800 1853V1959"/>
<use href="#phone" x="3446" y="1889.500" width="38" height="38" fill="#d9252a"/>
<text x="3673" y="1889.500" font-size="20.500" text-anchor="middle" textLength="136.600" lengthAdjust="spacingAndGlyphs" class="b k">Klaus Herzog</text>
<text x="3673" y="1930" font-size="20.500" text-anchor="middle" textLength="112" lengthAdjust="spacingAndGlyphs" style="fill:#555">06601600168</text>
<text x="3912.500" y="1875" font-size="15.500" text-anchor="middle" textLength="121" lengthAdjust="spacingAndGlyphs" style="fill:#666">Leitungsname lang</text>
<text x="3912.500" y="1913" font-size="22" text-anchor="middle" textLength="63.500" lengthAdjust="spacingAndGlyphs" class="b">Called</text>
<text x="3912.500" y="1950" font-size="22" text-anchor="middle" textLength="94" lengthAdjust="spacingAndGlyphs" class="b">00:00:00</text>

<!-- big card -->
<rect class="card sh" x="3426" y="1990.500" width="556" height="240"/>
<path class="sep" d="M3893 1991V2230"/>
<text x="3659.500" y="2034" font-size="25" text-anchor="middle" textLength="164" lengthAdjust="spacingAndGlyphs" class="b k">Klaus Herzog</text>
<text x="3659.500" y="2213" font-size="22" text-anchor="middle" textLength="125" lengthAdjust="spacingAndGlyphs" style="fill:#555">06601600168</text>
<use href="#hang" x="3907.500" y="2088.500" width="60" height="23.500" fill="#464445"/>
<use href="#up" x="3925" y="2108" width="25" height="25" fill="#148a42"/>

<!-- white underside -->
<rect x="0" y="2249" width="4000" height="408" fill="#fff"/>
</svg>
</body></html>
